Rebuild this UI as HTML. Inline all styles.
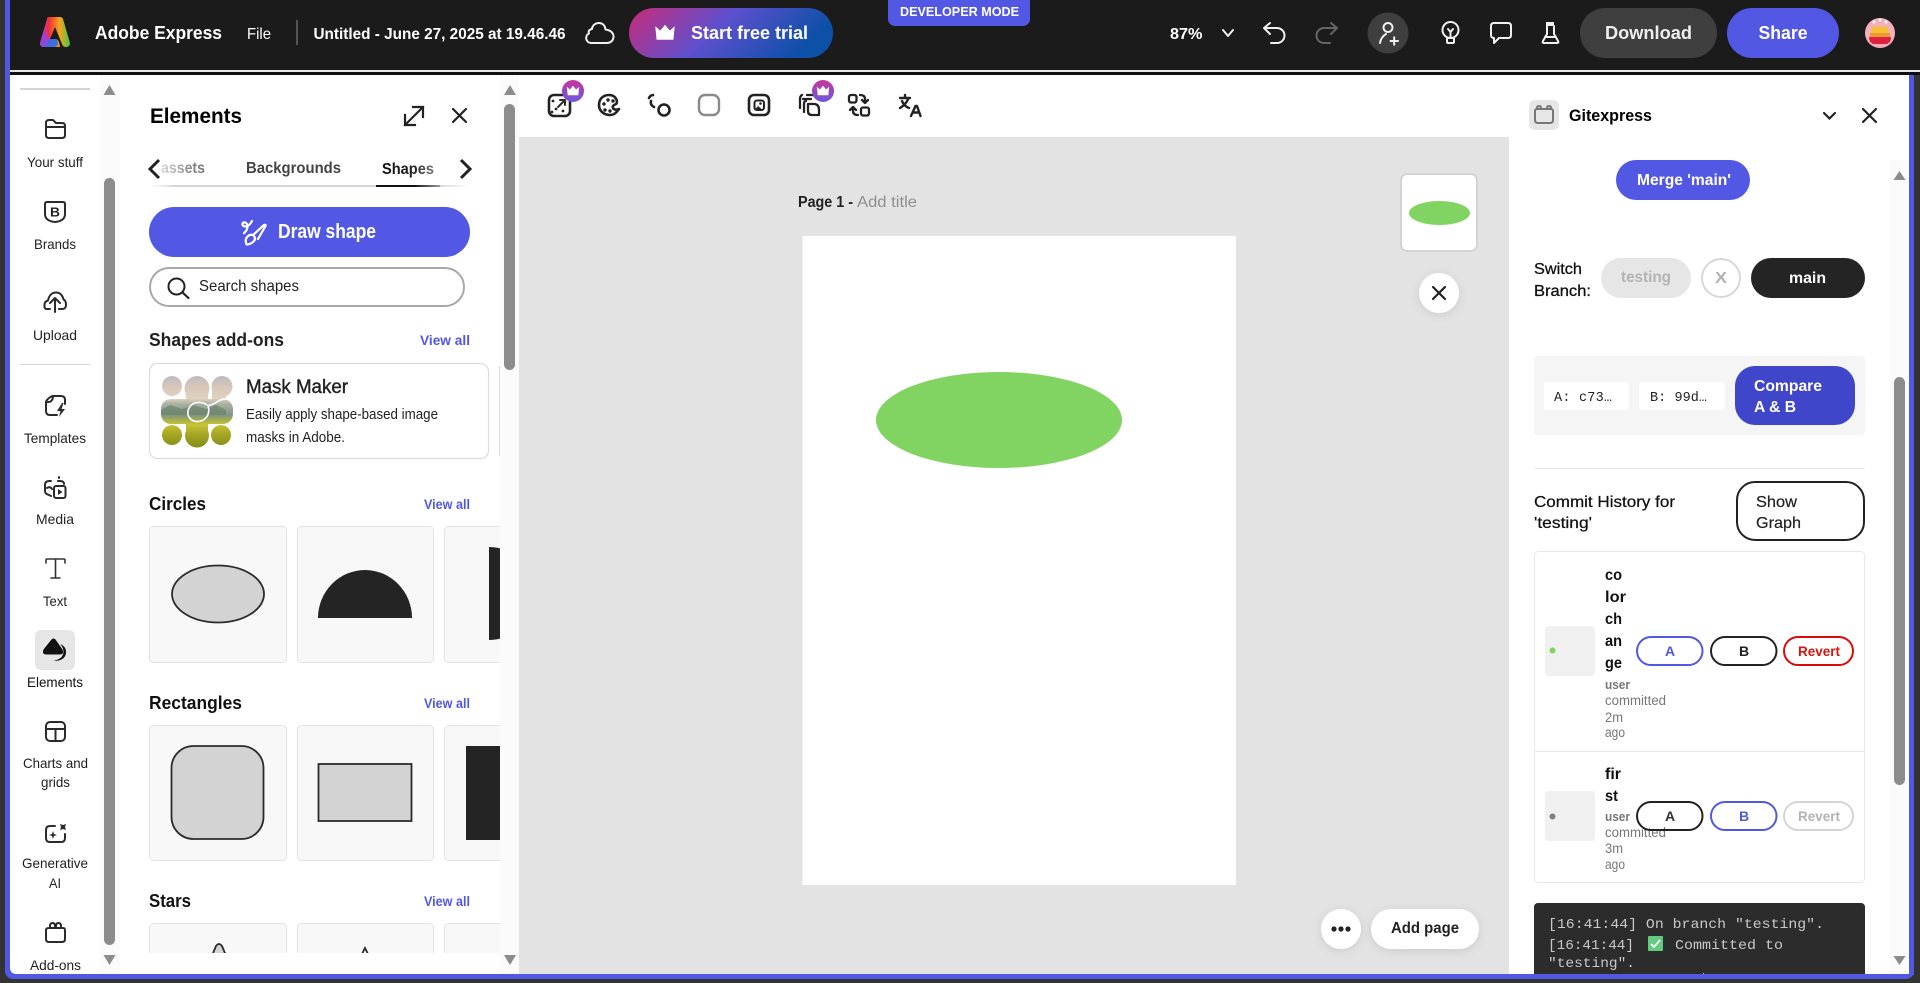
<!DOCTYPE html>
<html lang="en"><head><meta charset="utf-8"><title>Adobe Express</title>
<style>
html,body{margin:0;padding:0;width:1920px;height:983px;overflow:hidden;background:#333}
svg{display:block}
text{font-family:"Liberation Sans",sans-serif;fill:#222}
.b{font-weight:700}
.w{fill:#fff}
.m{font-family:"Liberation Mono",monospace}
.s{fill:none;stroke:#2b2b2b;stroke-width:2;stroke-linecap:round;stroke-linejoin:round}
.t{stroke:#222;stroke-width:2.6}
.sw{fill:none;stroke:#f0f0f0;stroke-width:2;stroke-linecap:round;stroke-linejoin:round}
.va{fill:#5258e4;font-weight:700;font-size:14px}
.lb{font-size:14px;fill:#222}
.g{fill:#777;font-size:13.5px}
</style></head><body>
<svg xmlns="http://www.w3.org/2000/svg" width="1920" height="983" viewBox="0 0 1920 983">
<defs>
<linearGradient id="tr" x1="0" x2="1" y1="0" y2="0.25"><stop offset="0" stop-color="#c92b78"/><stop offset=".5" stop-color="#5d50ce"/><stop offset="1" stop-color="#0d50a8"/></linearGradient>
<linearGradient id="bd" x1="0" x2="0" y1="0" y2="1"><stop offset="0" stop-color="#c9359a"/><stop offset="1" stop-color="#6a58e0"/></linearGradient>
<linearGradient id="lg" x1="0" x2="1" y1="0" y2="0"><stop offset="0" stop-color="#b33bd0"/><stop offset=".3" stop-color="#f0303a"/><stop offset=".65" stop-color="#f8a51a"/><stop offset="1" stop-color="#49c24a"/></linearGradient>
<linearGradient id="as" x1="0" x2="1" y1="0" y2="0"><stop offset="0" stop-color="#d8d8d8"/><stop offset=".7" stop-color="#888"/><stop offset="1" stop-color="#777"/></linearGradient>
<linearGradient id="sh" x1="0" x2="1" y1="0" y2="0"><stop offset="0" stop-color="#111"/><stop offset=".6" stop-color="#222"/><stop offset="1" stop-color="#777"/></linearGradient>
<linearGradient id="ul" x1="0" x2="1" y1="0" y2="0"><stop offset="0" stop-color="#fff"/><stop offset=".08" stop-color="#d6d6d6"/><stop offset=".9" stop-color="#d6d6d6"/><stop offset="1" stop-color="#fff"/></linearGradient>
<linearGradient id="ub" x1="0" x2="1" y1="0" y2="0"><stop offset="0" stop-color="#111"/><stop offset=".6" stop-color="#111"/><stop offset="1" stop-color="#999"/></linearGradient>
<linearGradient id="mk" x1="0" x2="0" y1="0" y2="1"><stop offset="0" stop-color="#bcb9c2"/><stop offset=".15" stop-color="#d6c6ba"/><stop offset=".32" stop-color="#e2d2c0"/><stop offset=".4" stop-color="#a9b0a4"/><stop offset=".55" stop-color="#7f9484"/><stop offset=".62" stop-color="#a8b04a"/><stop offset=".68" stop-color="#c8c235"/><stop offset=".8" stop-color="#a9a824"/><stop offset="1" stop-color="#7f8c18"/></linearGradient>
<clipPath id="mc"><circle cx="172" cy="386" r="10"/><circle cx="197" cy="388.500" r="12.500"/><circle cx="222" cy="386.500" r="10.500"/><rect x="161" y="399" width="72" height="25" rx="10"/><rect x="186" y="388" width="22" height="48"/><rect x="212" y="390" width="14" height="12"/><circle cx="172" cy="435" r="10"/><circle cx="197" cy="435.500" r="12"/><circle cx="221" cy="435" r="10"/></clipPath>
<clipPath id="pc"><rect x="120" y="70" width="380" height="883"/></clipPath>
<clipPath id="lc"><rect x="1534" y="903" width="331" height="71"/></clipPath>
<filter id="ds" x="-30%" y="-30%" width="160%" height="170%"><feDropShadow dx="0" dy="2" stdDeviation="5" flood-color="#000" flood-opacity=".1"/></filter>
<path id="crown" d="M-6.5-4.5-3.2-1.6 0-5.500 3.2-1.6 6.5-4.5 5.6 4.5H-5.6Z" fill="#fff"/>
</defs>

<!-- frame -->
<rect width="1920" height="983" fill="#333"/>
<rect x="5" y="0" width="5" height="100" fill="#5258e4"/>
<rect x="5" y="0" width="1909" height="979" rx="8" fill="#5258e4"/>
<rect x="5" y="0" width="5" height="60" fill="#5258e4"/>
<rect x="10" y="0" width="1910" height="70" fill="#1b1b1b"/>
<rect x="10" y="70" width="1910" height="2" fill="#e8e8e8"/>
<rect x="10" y="72" width="1910" height="3" fill="#111"/>
<rect x="1909" y="75" width="5" height="900" fill="#5258e4"/>
<rect x="1914" y="75" width="6" height="908" fill="#333"/>
<rect x="10" y="75" width="1899" height="899" rx="6" fill="#fff"/>
<rect x="10" y="75" width="1899" height="20" fill="#fff"/>

<!-- top bar -->
<path d="M49 17h11q2 0 3 2l7 24q0 4-4 4-3 0-4-3L55 27l-5 12h5q3 0 4 3l1 5H44q-4 0-4-4l7-24q0-2 2-2Z" fill="url(#lg)"/>
<path d="M40 43q0 4 4 4h9q5 0 5-4 0-4-4-4H44Z" fill="#3a6fe0"/>
<path d="M40 43l4-14 6 10-4 8h-2q-4 0-4-4Z" fill="#a33fd8" opacity=".75"/>
<text x="95" y="39" class="b w" font-size="18" textLength="127" lengthAdjust="spacingAndGlyphs">Adobe Express</text>
<text x="247" y="39" class="w" font-size="16" textLength="24" lengthAdjust="spacingAndGlyphs">File</text>
<rect x="296" y="20" width="2" height="25" fill="#555"/>
<text x="313.500" y="39" class="b w" font-size="16" textLength="252" lengthAdjust="spacingAndGlyphs">Untitled - June 27, 2025 at 19.46.46</text>
<path class="sw" d="M591 43a5 5 0 0 1-2-9.500c-1-2 0-4 3-4.500 0-3 3-6 7-6 3.500 0 6 2.500 6.500 6.500 5 .5 8 3.500 8 7 0 4-3 6.500-6.500 6.500Z"/>
<rect x="629" y="8" width="204" height="50" rx="25" fill="url(#tr)"/>
<use href="#crown" transform="translate(665 33) scale(1.5)"/>
<text x="691" y="39" class="b w" font-size="18" textLength="117" lengthAdjust="spacingAndGlyphs">Start free trial</text>
<path d="M888 0h142v19a7 7 0 0 1-7 7H895a7 7 0 0 1-7-7Z" fill="#5258e4"/>
<text x="900" y="16" class="b w" font-size="13" textLength="119" lengthAdjust="spacingAndGlyphs">DEVELOPER MODE</text>
<text x="1170" y="39" class="b w" font-size="16" textLength="32.500" lengthAdjust="spacingAndGlyphs">87%</text>
<path class="sw" d="M1223 30l5 6 5-6"/>
<path class="sw" d="M1270 23l-6 5 6 6M1265 28h12a7.500 7.500 0 0 1 0 15h-6"/>
<path d="M1331 23l6 5-6 6M1336 28h-12a7.500 7.500 0 0 0 0 15h6" fill="none" stroke="#666" stroke-width="2" stroke-linecap="round" stroke-linejoin="round"/>
<circle cx="1388" cy="33" r="20.500" fill="#3f3f3f"/>
<circle cx="1388" cy="27.500" r="4.500" class="sw"/>
<path class="sw" d="M1380 43q1-6 6-9M1390.500 41h7.500M1394.200 37.300v7.500"/>
<circle cx="1450.500" cy="30" r="8" class="sw"/><path class="sw" d="M1447 38h7v4q0 1-1 1h-5q-1 0-1-1ZM1448 29l2.500 3 2.500-3M1450.500 32v6"/>
<path class="sw" d="M1494 23h14q3 0 3 3v9q0 3-3 3h-9l-5 5v-5q-3 0-3-3v-9q0-3 3-3Z"/>
<rect x="1546" y="22" width="8" height="4" fill="#f0f0f0"/>
<path class="sw" d="M1547 26v8l-4 7q-1 2 1 2h13q2 0 1-2l-4-7v-8M1545 37h11"/>
<rect x="1580" y="8" width="137" height="50" rx="25" fill="#3f3f3f"/>
<text x="1605" y="39" class="b" style="fill:#eee" font-size="18" textLength="87" lengthAdjust="spacingAndGlyphs">Download</text>
<rect x="1727" y="8" width="112" height="50" rx="25" fill="#5258e4"/>
<text x="1758.500" y="39" class="b w" font-size="18" textLength="49" lengthAdjust="spacingAndGlyphs">Share</text>
<circle cx="1880" cy="33" r="15" fill="#f4afb7"/>
<rect x="1872" y="27" width="16" height="6" rx="2" fill="#f3c22e"/>
<rect x="1870" y="33" width="20" height="4" fill="#eb9a32"/>
<path d="M1869 37h22q0 5-4 7h-14q-4-2-4-7Z" fill="#dc2040"/>
<circle cx="1874" cy="22" r="1.500" fill="#fff"/><circle cx="1880" cy="20" r="1.500" fill="#fff"/><circle cx="1886" cy="22" r="1.500" fill="#fff"/>

<!-- left rail -->
<rect x="100" y="75" width="20" height="899" fill="#fbfbfb"/>
<path d="M109.500 85l6 10h-12Z" fill="#8c8c8c"/>
<rect x="104" y="178" width="11" height="767" rx="5.500" fill="#8c8c8c"/>
<path d="M109.500 965l6-10h-12Z" fill="#8c8c8c"/>
<rect x="20" y="88" width="70" height="2" fill="#d5d5d5"/>
<rect x="20" y="364" width="70" height="1" fill="#d5d5d5"/>

<path class="s" d="M46 127v-4q0-3 3-3h4l3 3h6q3 0 3 3v1M46 127h19v8q0 3-3 3H49q-3 0-3-3Z"/>
<text x="27" y="167" class="lb" textLength="56" lengthAdjust="spacingAndGlyphs">Your stuff</text>
<path class="s" d="M47 202h16q2 0 2 2v10q0 7-10 8-10-1-10-8v-10q0-2 2-2Z"/>
<text x="50" y="216.500" class="b" font-size="13" textLength="10" lengthAdjust="spacingAndGlyphs">B</text>
<text x="34" y="249" class="lb" textLength="42" lengthAdjust="spacingAndGlyphs">Brands</text>
<path class="s" d="M50 309h-4q-2-1-1.500-4c0-3 1.500-4 3.500-4.500 1-5 4-8 8-8 4 0 6.500 3 7.500 7 2 .5 2.500 3 2.500 5.500 0 2-1 4-4 4h-3M55 312v-13M50 303l5-5 5 5"/>
<text x="33" y="340" class="lb" textLength="44" lengthAdjust="spacingAndGlyphs">Upload</text>
<path class="s" d="M53 396h8q4 0 4 4v4M53 396c-2 0-7 4-7 6v9q0 4 4 4h7M46 402q7 1 7-6"/>
<path d="M62 403l-5 8h3.500l-1.500 6 6-8h-3.500l2-6Z" fill="#2b2b2b"/>
<text x="24" y="443" class="lb" textLength="62" lengthAdjust="spacingAndGlyphs">Templates</text>
<path class="s" d="M58 481h2q4 0 4 3M51 481h-2q-4 0-4 4v6q0 3 4 4l2 1M47 488q3-2 5 1M59 477v1"/>
<rect x="54" y="486" width="11.500" height="12" rx="2" class="s"/><path d="M58 489l4.500 3-4.500 3Z" fill="#2b2b2b"/>
<text x="36" y="524" class="lb" textLength="38" lengthAdjust="spacingAndGlyphs">Media</text>
<path d="M46 563v-3q0-1 1-1h17q1 0 1 1v3M55.500 559v19M51 578h9" fill="none" stroke="#333" stroke-width="1.600" stroke-linecap="round"/>
<text x="43" y="606" class="lb" textLength="24" lengthAdjust="spacingAndGlyphs">Text</text>
<rect x="35" y="630" width="40" height="40" rx="6" fill="#e6e6e6"/>
<path d="M51.500 639.500q2-2 4 0l7 10q2 5-3 5h-13q-5 0-3-5Z" fill="#111"/>
<path d="M60.500 644q6 3 5.500 9-1 8-12.500 8 6-1.500 8.500-4.500 3-5 0-10Z" fill="#111"/>
<text x="27" y="687" class="lb" style="fill:#111" textLength="56" lengthAdjust="spacingAndGlyphs">Elements</text>
<rect x="46" y="722" width="19" height="19" rx="4" class="s"/><path class="s" d="M46 729h19M55.500 729v12"/>
<text x="23" y="768" class="lb" textLength="65" lengthAdjust="spacingAndGlyphs">Charts and</text>
<text x="41" y="787" class="lb" textLength="29" lengthAdjust="spacingAndGlyphs">grids</text>
<path class="s" d="M55 826H50q-4 0-4 4v8q0 4 4 4h11q4 0 4-4v-4"/>
<path d="M53 831l1 3 3 1-3 1-1 3-1-3-3-1 3-1ZM62 822l1 3 3-1-1 3 1 3-3-1-3 1 1-3-1-3 3 1Z" fill="#2b2b2b"/>
<text x="22" y="868" class="lb" textLength="66" lengthAdjust="spacingAndGlyphs">Generative</text>
<text x="49" y="888" class="lb" textLength="12" lengthAdjust="spacingAndGlyphs">AI</text>
<path class="s" d="M49 928h14q2 0 2 2v9q0 3-3 3H49q-3 0-3-3v-9q0-2 3-2ZM50 928v-2q0-3 2.500-3t2.500 3v2M56 928v-2q0-3 2.500-3t2.500 3v2"/>
<text x="30" y="970" class="lb" textLength="51" lengthAdjust="spacingAndGlyphs">Add-ons</text>

<!-- elements panel -->
<rect x="500" y="75" width="19" height="899" fill="#fbfbfb"/>
<path d="M510 85l6 10h-12Z" fill="#8c8c8c"/>
<rect x="504" y="104" width="11" height="266" rx="5.500" fill="#8c8c8c"/>
<path d="M510 965l6-10h-12Z" fill="#8c8c8c"/>
<text x="150" y="123" class="b" style="fill:#000" font-size="21" textLength="92" lengthAdjust="spacingAndGlyphs">Elements</text>
<path d="M405 125l18-18M413 107h10v10M405 115v10h10" fill="none" stroke="#222" stroke-width="2.200" stroke-linecap="square"/>
<path d="M453 109l13 13M466 109l-13 13" fill="none" stroke="#222" stroke-width="2.200" stroke-linecap="round"/>
<path d="M159 160l-9 9 9 9" fill="none" stroke="#222" stroke-width="3"/>
<text x="161" y="173" class="b" style="fill:url(#as)" font-size="16" textLength="44" lengthAdjust="spacingAndGlyphs">assets</text>
<text x="246" y="173" class="b" style="fill:#444" font-size="16" textLength="95" lengthAdjust="spacingAndGlyphs">Backgrounds</text>
<text x="382" y="174" class="b" style="fill:url(#sh)" font-size="16" textLength="52" lengthAdjust="spacingAndGlyphs">Shapes</text>
<path d="M461 160l9 9-9 9" fill="none" stroke="#222" stroke-width="3"/>
<rect x="150" y="185" width="320" height="2" fill="url(#ul)"/>
<rect x="376" y="185" width="64" height="2" fill="url(#ub)"/>
<rect x="149" y="207" width="321" height="50" rx="25" fill="#5258e4"/>
<path d="M246.500 244.500q-2-5 1-8 3-3 6-1 3 3 0 6-3 3-7 3ZM253 235l11-10q2-1 1.500 1L258 239M252 221q-3 5.500-6.500 5.500-3 0-3-2.200 0-2 2-2 3.500 1 3 5l-1 3-2.500 3" fill="none" stroke="#fff" stroke-width="2.200" stroke-linecap="round" stroke-linejoin="round"/>
<text x="278" y="238" class="b w" font-size="20" textLength="98" lengthAdjust="spacingAndGlyphs">Draw shape</text>
<rect x="150" y="268" width="314" height="38" rx="19" fill="#fff" stroke="#a8a8a8" stroke-width="2"/>
<circle cx="176.500" cy="286.500" r="8" fill="none" stroke="#222" stroke-width="2"/><path d="M182.500 292.500l6 5.500" stroke="#222" stroke-width="2.200" stroke-linecap="round"/>
<text x="199" y="291" font-size="16" textLength="100" lengthAdjust="spacingAndGlyphs">Search shapes</text>
<text x="149" y="346" class="b" font-size="18" textLength="135" lengthAdjust="spacingAndGlyphs">Shapes add-ons</text>
<text x="420" y="345" class="va" textLength="50" lengthAdjust="spacingAndGlyphs">View all</text>
<rect x="149.500" y="363.500" width="339" height="95" rx="8" fill="#fff" stroke="#dcdcdc" stroke-width="1.200"/>
<rect x="499" y="366" width="1" height="90" fill="#dcdcdc"/>
<g clip-path="url(#mc)"><rect x="160" y="375" width="75" height="73" fill="url(#mk)"/><path d="M161 410l9-5 12 4 12-4 12 4 10-4 10 5v5h-65Z" fill="#6b8268" opacity=".7"/></g>
<path d="M232.500 400q-8-2.500-14 1-5 3.500-10.500 4.500M208 405.500q3 10-5.500 15-9 3.500-14-4-2.500-8 5-13 7-3 14.500 2" fill="none" stroke="#fff" stroke-width="1.600"/>
<text x="246" y="393" class="b" font-size="19" style="fill:#222;font-weight:400;stroke:#222;stroke-width:.4" textLength="102" lengthAdjust="spacingAndGlyphs">Mask Maker</text>
<text x="246" y="419" font-size="14.500" textLength="192" lengthAdjust="spacingAndGlyphs">Easily apply shape-based image</text>
<text x="246" y="442" font-size="14.500" textLength="99" lengthAdjust="spacingAndGlyphs">masks in Adobe.</text>

<text x="149" y="510" class="b" style="fill:#111" font-size="18" textLength="57" lengthAdjust="spacingAndGlyphs">Circles</text>
<text x="424" y="509" class="va" textLength="46" lengthAdjust="spacingAndGlyphs">View all</text>
<g clip-path="url(#pc)">
<rect x="149.500" y="526.500" width="137" height="136" rx="4" fill="#f8f8f8" stroke="#e3e3e3"/>
<rect x="297.500" y="526.500" width="136" height="136" rx="4" fill="#f8f8f8" stroke="#e3e3e3"/>
<rect x="444.500" y="526.500" width="136" height="136" rx="4" fill="#f8f8f8" stroke="#e3e3e3"/>
<ellipse cx="218" cy="594" rx="46" ry="28.500" fill="#d3d3d3" stroke="#2c2c2c" stroke-width="1.800"/>
<path d="M318 618a47 48 0 0 1 94 0Z" fill="#242424"/>
<path d="M489 547a46.500 46.500 0 0 1 0 93Z" fill="#242424"/>
<rect x="149.500" y="725.500" width="137" height="135" rx="4" fill="#f8f8f8" stroke="#e3e3e3"/>
<rect x="297.500" y="725.500" width="136" height="135" rx="4" fill="#f8f8f8" stroke="#e3e3e3"/>
<rect x="444.500" y="725.500" width="136" height="135" rx="4" fill="#f8f8f8" stroke="#e3e3e3"/>
<rect x="171.500" y="746" width="92" height="93" rx="22" fill="#d3d3d3" stroke="#2c2c2c" stroke-width="1.800"/>
<rect x="318.500" y="764" width="93" height="57" fill="#d3d3d3" stroke="#2c2c2c" stroke-width="1.800"/>
<rect x="466" y="746" width="80" height="94" fill="#242424"/>
<rect x="149.500" y="923.500" width="137" height="80" rx="4" fill="#f8f8f8" stroke="#e3e3e3"/>
<rect x="297.500" y="923.500" width="136" height="80" rx="4" fill="#f8f8f8" stroke="#e3e3e3"/>
<rect x="444.500" y="923.500" width="136" height="80" rx="4" fill="#f8f8f8" stroke="#e3e3e3"/>
<path d="M211 958l5-12q3-4 6 0l5 12Z" fill="#d3d3d3" stroke="#2c2c2c" stroke-width="1.800"/>
<path d="M360 958l5-10 5 10" fill="none" stroke="#2c2c2c" stroke-width="1.800"/>
</g>
<text x="149" y="709" class="b" style="fill:#111" font-size="18" textLength="93" lengthAdjust="spacingAndGlyphs">Rectangles</text>
<text x="424" y="708" class="va" textLength="46" lengthAdjust="spacingAndGlyphs">View all</text>
<text x="149" y="907" class="b" style="fill:#111" font-size="18" textLength="42" lengthAdjust="spacingAndGlyphs">Stars</text>
<text x="424" y="906" class="va" textLength="46" lengthAdjust="spacingAndGlyphs">View all</text>

<!-- canvas -->
<rect x="519" y="137" width="990" height="837" fill="#e3e3e3"/>
<rect x="802.500" y="236" width="433.500" height="649" fill="#fff"/>
<ellipse cx="999" cy="420" rx="123" ry="48" fill="#82d462"/>
<text x="798" y="207" class="b" font-size="16" textLength="55" lengthAdjust="spacingAndGlyphs">Page 1 -</text>
<text x="857" y="207" style="fill:#8e8e8e" font-size="16" textLength="60" lengthAdjust="spacingAndGlyphs">Add title</text>
<rect x="1401" y="174" width="76" height="77" rx="6" fill="#fff" stroke="#d4d4d4" stroke-width="2"/>
<ellipse cx="1439.500" cy="213" rx="30.500" ry="12" fill="#82d462"/>
<circle cx="1439" cy="293" r="20" fill="#fff" filter="url(#ds)"/>
<path d="M1433 287l12 12M1445 287l-12 12" stroke="#222" stroke-width="2.200" stroke-linecap="round"/>
<circle cx="1341" cy="929" r="20" fill="#fff" filter="url(#ds)"/>
<circle cx="1334" cy="929" r="2.600" fill="#222"/><circle cx="1341" cy="929" r="2.600" fill="#222"/><circle cx="1348" cy="929" r="2.600" fill="#222"/>
<rect x="1371" y="909" width="108" height="40" rx="20" fill="#fff" filter="url(#ds)"/>
<text x="1391" y="933" class="b" style="fill:#222" font-size="16" textLength="68" lengthAdjust="spacingAndGlyphs">Add page</text>

<!-- toolbar -->
<rect x="549" y="95" width="21" height="21" rx="5" class="s t"/>
<path class="s" d="M558 107l7-7M560 100h5v5"/>
<circle cx="553" cy="101" r="1.400" fill="#222"/><circle cx="556" cy="109" r="1.400" fill="#222"/><circle cx="552" cy="112" r="1.400" fill="#222"/><circle cx="563" cy="111" r="1.400" fill="#222"/>
<circle cx="573" cy="91" r="11" fill="url(#bd)"/><use href="#crown" transform="translate(573 91) scale(.95)"/>
<path class="s t" d="M609 95c-6 0-10 4-10 10s5 10 11 10c4 0 6-2 9-6-2 1-5 1-6-1-1-2 1-3 3-4 2-1 1-9-7-9Z"/>
<circle cx="604" cy="104" r="1.700" fill="#222"/><circle cx="608" cy="100" r="1.700" fill="#222"/><circle cx="613" cy="101" r="1.700" fill="#222"/><circle cx="605" cy="110" r="1.700" fill="#222"/><circle cx="610" cy="111" r="1.700" fill="#222"/>
<circle cx="664" cy="110" r="5.500" class="s t"/>
<path class="s t" d="M653 95q-3 .5-4 3M651 101q-1 4 3 6"/>
<rect x="699" y="95" width="20" height="20" rx="6" fill="none" stroke="#8a8a8a" stroke-width="2.400"/>
<rect x="749" y="95" width="20" height="20" rx="5" class="s t"/>
<rect x="754.500" y="100.500" width="9.500" height="9.500" rx="2.500" fill="#fff" stroke="#222" stroke-width="2"/><path d="M755 109.500l3-3.500 2.500 2 1 1.500Z" fill="#222"/><circle cx="760.500" cy="103.500" r="1.300" fill="#222"/>
<path class="s t" d="M807 95h5q2 0 3 1M803 99h8M800 108V99q0-3 2-4M804 112v-8q0-3 2-3M808 104h6q5 0 5 6v5h-7q-4 0-4-4Z" style="stroke-width:2.300"/>
<circle cx="823" cy="91" r="11" fill="url(#bd)"/><use href="#crown" transform="translate(823 91) scale(.95)"/>
<rect x="849" y="95" width="7.500" height="7.500" rx="2" class="s t" style="stroke-width:2.300"/>
<rect x="861" y="107.500" width="8" height="8" rx="2" class="s t" style="stroke-width:2.300"/>
<path class="s t" style="stroke-width:2.300" d="M860 95q5 0 5 4v4M862 100l3 3 3-3M858 115q-5 0-5-4v-4M850 110l3-3 3 3"/>
<path d="M900 98h10M905 95v3M908.500 98q-2 6-8.500 10M902 101q2 5 7 7M911 116l4.500-10h1.500l3.500 10M912.500 112.500h6.500" fill="none" stroke="#222" stroke-width="2.400" stroke-linecap="round" stroke-linejoin="round"/>

<!-- right panel -->
<rect x="1890" y="160" width="19" height="814" fill="#fbfbfb"/>
<path d="M1899.500 171l6 9h-12Z" fill="#8c8c8c"/>
<rect x="1894" y="377" width="11" height="408" rx="5.500" fill="#8c8c8c"/>
<path d="M1899.500 965l6-9h-12Z" fill="#8c8c8c"/>
<rect x="1529" y="100" width="30" height="30" rx="6" fill="#e6e6e6"/>
<path d="M1537 109h14q2 0 2 2v9q0 3-3 3h-12q-3 0-3-3v-9q0-2 2-2ZM1537 109v-1q0-2 2-2t2 2v1M1547 109v-1q0-2 2-2t2 2v1" fill="none" stroke="#777" stroke-width="2"/>
<text x="1569" y="121" class="b" style="fill:#000" font-size="17" textLength="83" lengthAdjust="spacingAndGlyphs">Gitexpress</text>
<path d="M1824 113l5.500 5.500 5.500-5.500" fill="none" stroke="#222" stroke-width="2.200" stroke-linecap="round"/>
<path d="M1863 109l13 13M1876 109l-13 13" stroke="#222" stroke-width="2.200" stroke-linecap="round"/>
<rect x="1616" y="160" width="134" height="40" rx="20" fill="#5258e4"/>
<text x="1637" y="185" class="b w" font-size="16" textLength="94" lengthAdjust="spacingAndGlyphs">Merge 'main'</text>
<text x="1534" y="274" class="b" style="fill:#111;font-weight:400;stroke:#111;stroke-width:.3" font-size="16" textLength="48" lengthAdjust="spacingAndGlyphs">Switch</text>
<text x="1534" y="296" class="b" style="fill:#111;font-weight:400;stroke:#111;stroke-width:.3" font-size="16" textLength="57" lengthAdjust="spacingAndGlyphs">Branch:</text>
<rect x="1601" y="258" width="90" height="40" rx="20" fill="#e6e6e6"/>
<text x="1621" y="282" class="b" style="fill:#b3b3b3" font-size="16" textLength="50" lengthAdjust="spacingAndGlyphs">testing</text>
<circle cx="1721" cy="278" r="19" fill="#fff" stroke="#d8d8d8" stroke-width="2"/>
<text x="1715" y="283" class="b" style="fill:#b3b3b3" font-size="16" textLength="12" lengthAdjust="spacingAndGlyphs">X</text>
<rect x="1751" y="258" width="114" height="40" rx="20" fill="#242424"/>
<text x="1789" y="283" class="b w" font-size="16" textLength="37" lengthAdjust="spacingAndGlyphs">main</text>
<rect x="1534" y="356" width="331" height="79" rx="4" fill="#f5f5f5"/>
<rect x="1544" y="382" width="85" height="28" rx="3" fill="#fff"/>
<rect x="1639" y="382" width="86" height="28" rx="3" fill="#fff"/>
<text x="1554" y="401" class="m" font-size="13.500" textLength="58" lengthAdjust="spacing">A: c73…</text>
<text x="1650" y="401" class="m" font-size="13.500" textLength="57" lengthAdjust="spacing">B: 99d…</text>
<rect x="1735" y="366" width="120" height="59" rx="20" fill="#4046c9"/>
<text x="1754" y="391" class="b w" font-size="16" textLength="68" lengthAdjust="spacingAndGlyphs">Compare</text>
<text x="1754" y="412" class="b w" font-size="16" textLength="42" lengthAdjust="spacingAndGlyphs">A &amp; B</text>
<rect x="1534" y="468" width="331" height="1" fill="#e8e8e8"/>

<text x="1534" y="507" style="fill:#111;stroke:#111;stroke-width:.25" font-size="16" textLength="141" lengthAdjust="spacingAndGlyphs">Commit History for</text>
<text x="1534" y="528" style="fill:#111;stroke:#111;stroke-width:.25" font-size="16" textLength="58" lengthAdjust="spacingAndGlyphs">'testing'</text>
<rect x="1737" y="482" width="127" height="58" rx="18" fill="#fff" stroke="#222" stroke-width="2"/>
<text x="1756" y="507" style="fill:#222;stroke:#222;stroke-width:.2" font-size="16" textLength="41" lengthAdjust="spacingAndGlyphs">Show</text>
<text x="1756" y="528" style="fill:#222;stroke:#222;stroke-width:.2" font-size="16" textLength="45" lengthAdjust="spacingAndGlyphs">Graph</text>
<rect x="1534.500" y="551.500" width="330" height="331" rx="4" fill="#fff" stroke="#e8e8e8"/>
<rect x="1535" y="751" width="329" height="1" fill="#e8e8e8"/>

<rect x="1545" y="626" width="50" height="50" rx="4" fill="#f0f0f0"/>
<circle cx="1552.500" cy="650.500" r="3" fill="#82d462"/>
<g font-size="16" class="b">
<text x="1605" y="580" style="fill:#111" textLength="17" lengthAdjust="spacingAndGlyphs">co</text>
<text x="1605" y="602" style="fill:#111" textLength="21" lengthAdjust="spacingAndGlyphs">lor</text>
<text x="1605" y="624" style="fill:#111" textLength="17" lengthAdjust="spacingAndGlyphs">ch</text>
<text x="1605" y="646" style="fill:#111" textLength="17" lengthAdjust="spacingAndGlyphs">an</text>
<text x="1605" y="668" style="fill:#111" textLength="17" lengthAdjust="spacingAndGlyphs">ge</text>
</g>
<text x="1605" y="689" class="b" style="fill:#777" font-size="13" textLength="25" lengthAdjust="spacingAndGlyphs">user</text>
<text x="1605" y="705" class="g" textLength="61" lengthAdjust="spacingAndGlyphs">committed</text>
<text x="1605" y="722" class="g" textLength="18" lengthAdjust="spacingAndGlyphs">2m</text>
<text x="1605" y="737" class="g" textLength="20" lengthAdjust="spacingAndGlyphs">ago</text>
<rect x="1637" y="637" width="65.500" height="28" rx="14" fill="#fff" stroke="#5258e4" stroke-width="2"/>
<text x="1665" y="656" class="b" style="fill:#5258e4" font-size="14">A</text>
<rect x="1711" y="637" width="65.500" height="28" rx="14" fill="#fff" stroke="#222" stroke-width="2"/>
<text x="1739" y="656" class="b" style="fill:#222" font-size="14">B</text>
<rect x="1784" y="637" width="69" height="28" rx="14" fill="#fff" stroke="#d90b0b" stroke-width="2"/>
<text x="1798" y="656" class="b" style="fill:#d31510" font-size="14" textLength="42" lengthAdjust="spacingAndGlyphs">Revert</text>

<rect x="1545" y="791" width="50" height="50" rx="4" fill="#f0f0f0"/>
<circle cx="1552.500" cy="816.500" r="3" fill="#7a837a"/>
<text x="1605" y="779" class="b" style="fill:#111" font-size="16" textLength="16" lengthAdjust="spacingAndGlyphs">fir</text>
<text x="1605" y="801" class="b" style="fill:#111" font-size="16" textLength="13" lengthAdjust="spacingAndGlyphs">st</text>
<text x="1605" y="821" class="b" style="fill:#777" font-size="13" textLength="25" lengthAdjust="spacingAndGlyphs">user</text>
<text x="1605" y="837" class="g" textLength="61" lengthAdjust="spacingAndGlyphs">committed</text>
<text x="1605" y="853" class="g" textLength="18" lengthAdjust="spacingAndGlyphs">3m</text>
<text x="1605" y="869" class="g" textLength="20" lengthAdjust="spacingAndGlyphs">ago</text>
<rect x="1637" y="802" width="65.500" height="28" rx="14" fill="none" stroke="#222" stroke-width="2"/>
<text x="1665" y="821" class="b" style="fill:#333" font-size="14">A</text>
<rect x="1711" y="802" width="65.500" height="28" rx="14" fill="#fff" stroke="#5258e4" stroke-width="2"/>
<text x="1739" y="821" class="b" style="fill:#5258e4" font-size="14">B</text>
<rect x="1784" y="802" width="69" height="28" rx="14" fill="#fff" stroke="#d5d5d5" stroke-width="2"/>
<text x="1798" y="821" class="b" style="fill:#b3b3b3" font-size="14" textLength="42" lengthAdjust="spacingAndGlyphs">Revert</text>

<g clip-path="url(#lc)">
<rect x="1534" y="903" width="331" height="90" rx="4" fill="#2c2c2c"/>
<text x="1548" y="928" class="m" style="fill:#c8c8c8" font-size="14" textLength="276" lengthAdjust="spacingAndGlyphs">[16:41:44] On branch "testing".</text>
<text x="1548" y="949" class="m" style="fill:#c8c8c8" font-size="14" textLength="86" lengthAdjust="spacingAndGlyphs">[16:41:44]</text>
<rect x="1648" y="936" width="15" height="15" rx="1" fill="#62cb7e"/>
<path d="M1651 944l3 3 6-7" fill="none" stroke="#fff" stroke-width="1.800"/>
<text x="1675" y="949" class="m" style="fill:#c8c8c8" font-size="14" textLength="108" lengthAdjust="spacingAndGlyphs">Committed to</text>
<text x="1548" y="967" class="m" style="fill:#c8c8c8" font-size="14" textLength="87" lengthAdjust="spacingAndGlyphs">"testing".</text>
<rect x="1703" y="973" width="1" height="1" fill="#c8c8c8"/>
</g>
</svg>
</body></html>
